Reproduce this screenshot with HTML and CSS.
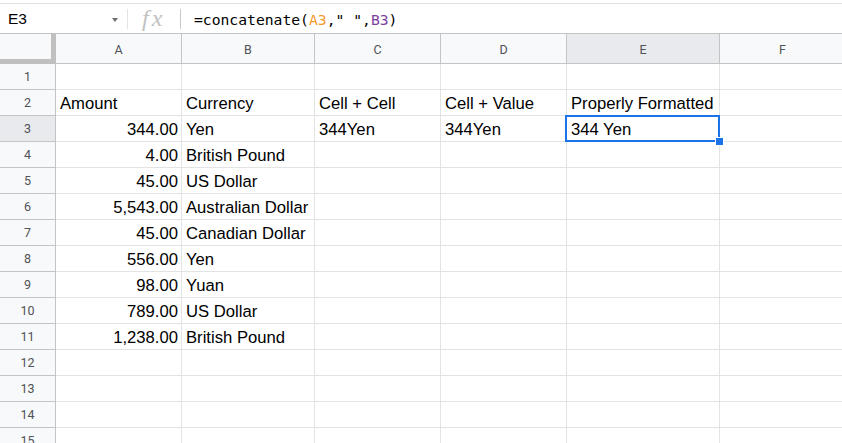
FILE: index.html
```html
<!DOCTYPE html>
<html lang="en">
<head>
<meta charset="utf-8">
<title>Sheet</title>
<link rel="stylesheet" href="styles.css">
</head>
<body>
<div class="app">
  <div class="formula-bar">
    <div class="namebox">
      <span class="namebox-text">E3</span>
      <span class="namebox-arrow"></span>
    </div>
    <div class="sep"></div>
    <div class="fx">fx</div>
    <div class="sep sep-dark"></div>
    <div class="formula">=concatenate(<span class="ref-a">A3</span>," ",<span class="ref-b">B3</span>)</div>
  </div>

  <div class="sheet">
    <div class="corner"></div>
    <div class="colhead">A</div>
    <div class="colhead">B</div>
    <div class="colhead">C</div>
    <div class="colhead">D</div>
    <div class="colhead colhead-sel">E</div>
    <div class="colhead">F</div>

    <div class="rowhead">1</div>
    <div class="cell"></div><div class="cell"></div><div class="cell"></div><div class="cell"></div><div class="cell"></div><div class="cell"></div>

    <div class="rowhead">2</div>
    <div class="cell">Amount</div><div class="cell">Currency</div><div class="cell">Cell + Cell</div><div class="cell">Cell + Value</div><div class="cell">Properly Formatted</div><div class="cell"></div>

    <div class="rowhead rowhead-sel">3</div>
    <div class="cell num">344.00</div><div class="cell">Yen</div><div class="cell">344Yen</div><div class="cell">344Yen</div><div class="cell cell-active">344 Yen<span class="selection"></span><span class="handle"></span></div><div class="cell"></div>

    <div class="rowhead">4</div>
    <div class="cell num">4.00</div><div class="cell">British Pound</div><div class="cell"></div><div class="cell"></div><div class="cell"></div><div class="cell"></div>

    <div class="rowhead">5</div>
    <div class="cell num">45.00</div><div class="cell">US Dollar</div><div class="cell"></div><div class="cell"></div><div class="cell"></div><div class="cell"></div>

    <div class="rowhead">6</div>
    <div class="cell num">5,543.00</div><div class="cell">Australian Dollar</div><div class="cell"></div><div class="cell"></div><div class="cell"></div><div class="cell"></div>

    <div class="rowhead">7</div>
    <div class="cell num">45.00</div><div class="cell">Canadian Dollar</div><div class="cell"></div><div class="cell"></div><div class="cell"></div><div class="cell"></div>

    <div class="rowhead">8</div>
    <div class="cell num">556.00</div><div class="cell">Yen</div><div class="cell"></div><div class="cell"></div><div class="cell"></div><div class="cell"></div>

    <div class="rowhead">9</div>
    <div class="cell num">98.00</div><div class="cell">Yuan</div><div class="cell"></div><div class="cell"></div><div class="cell"></div><div class="cell"></div>

    <div class="rowhead">10</div>
    <div class="cell num">789.00</div><div class="cell">US Dollar</div><div class="cell"></div><div class="cell"></div><div class="cell"></div><div class="cell"></div>

    <div class="rowhead">11</div>
    <div class="cell num">1,238.00</div><div class="cell">British Pound</div><div class="cell"></div><div class="cell"></div><div class="cell"></div><div class="cell"></div>

    <div class="rowhead">12</div>
    <div class="cell"></div><div class="cell"></div><div class="cell"></div><div class="cell"></div><div class="cell"></div><div class="cell"></div>

    <div class="rowhead">13</div>
    <div class="cell"></div><div class="cell"></div><div class="cell"></div><div class="cell"></div><div class="cell"></div><div class="cell"></div>

    <div class="rowhead">14</div>
    <div class="cell"></div><div class="cell"></div><div class="cell"></div><div class="cell"></div><div class="cell"></div><div class="cell"></div>

    <div class="rowhead">15</div>
    <div class="cell"></div><div class="cell"></div><div class="cell"></div><div class="cell"></div><div class="cell"></div><div class="cell"></div>
  </div>
</div>
</body>
</html>
```

FILE: styles.css
```css
html, body {
  margin: 0;
  padding: 0;
  background: #ffffff;
  overflow: hidden;
}

.app {
  width: 846px;
  padding-top: 3px;
  font-family: "Liberation Sans", Arial, sans-serif;
}

/* ---------- formula bar ---------- */
.formula-bar {
  display: flex;
  align-items: center;
  height: 29px;
  border-top: 1px solid #e1e1e1;
  border-bottom: 1px solid #c4c4c4;
}

.namebox {
  width: 127px;
  height: 100%;
  box-sizing: border-box;
  display: flex;
  align-items: center;
  justify-content: space-between;
  padding-left: 8px;
  padding-right: 9px;
}

.namebox-text {
  font-family: "Liberation Sans", Arial, sans-serif;
  font-size: 15.5px;
  color: #000000;
  margin-top: 1px;
}

.namebox-arrow {
  width: 0;
  height: 0;
  border-left: 3.5px solid transparent;
  border-right: 3.5px solid transparent;
  border-top: 4px solid #6f6f6f;
  margin-top: 2px;
}

.sep {
  width: 1px;
  height: 20px;
  background: #e3e3e3;
}

.sep-dark {
  background: #c9c9c9;
}

.fx {
  width: 52px;
  box-sizing: border-box;
  padding-left: 14px;
  font-family: "Liberation Serif", "Times New Roman", serif;
  font-style: italic;
  font-size: 24px;
  letter-spacing: 3px;
  color: #c2c2c2;
  line-height: 1;
  margin-top: -1px;
}

.formula {
  padding-left: 13px;
  font-family: "DejaVu Sans Mono", "Liberation Mono", monospace;
  font-size: 14.7px;
  color: #000000;
  white-space: pre;
  margin-top: 1px;
}

.ref-a { color: #f39a2c; }
.ref-b { color: #7e3f9f; }

/* ---------- sheet grid ---------- */
.sheet {
  display: grid;
  grid-template-columns: 56px 126px 133px 126px 126px 153px 126px;
  grid-template-rows: 30px;
  grid-auto-rows: 26px;
}

.corner,
.colhead,
.rowhead,
.cell {
  box-sizing: border-box;
}

.corner {
  background: #f8f9fa;
  border-right: 5px solid #c0c0c0;
  border-bottom: 5px solid #c0c0c0;
}

.colhead {
  background: #f8f9fa;
  border-right: 1px solid #c4c4c4;
  border-bottom: 1px solid #c4c4c4;
  display: flex;
  align-items: center;
  justify-content: center;
  font-family: Roboto, "Liberation Sans", Arial, sans-serif;
  font-size: 12.5px;
  color: #4f5256;
  padding-top: 1px;
}

.colhead-sel {
  background: #e8eaed;
}

.rowhead {
  background: #f8f9fa;
  border-right: 1px solid #c4c4c4;
  border-bottom: 1px solid #c4c4c4;
  display: flex;
  align-items: center;
  justify-content: center;
  font-family: Roboto, "Liberation Sans", Arial, sans-serif;
  font-size: 12.5px;
  color: #4f5256;
}

.rowhead-sel {
  background: #e8eaed;
}

.cell {
  position: relative;
  border-right: 1px solid #e2e3e3;
  border-bottom: 1px solid #e2e3e3;
  display: flex;
  align-items: flex-end;
  padding: 0 3px 2px 4px;
  font-size: 16.67px;
  line-height: 19px;
  color: #000000;
  white-space: nowrap;
}

.num {
  justify-content: flex-end;
}

/* active cell selection (overlay) */
.selection {
  position: absolute;
  left: -2px;
  top: -1px;
  width: 155px;
  height: 27px;
  box-sizing: border-box;
  border: 2px solid #1a73e8;
  pointer-events: none;
}

.handle {
  position: absolute;
  left: 148px;
  top: 21px;
  width: 7px;
  height: 7px;
  background: #1a73e8;
  border: 1px solid #ffffff;
  z-index: 2;
}
```
